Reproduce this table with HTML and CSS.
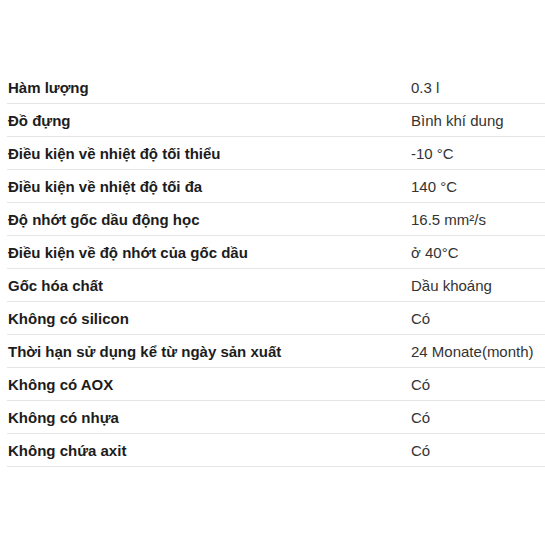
FILE: index.html
```html
<!DOCTYPE html>
<html lang="vi">
<head>
<meta charset="utf-8">
<link rel="stylesheet" href="styles.css">
</head>
<body>
<div class="specs">
  <div class="row"><div class="k">Hàm lượng</div><div class="v">0.3 l</div></div>
  <div class="row"><div class="k">Đồ đựng</div><div class="v">Bình khí dung</div></div>
  <div class="row"><div class="k">Điều kiện về nhiệt độ tối thiểu</div><div class="v">-10 °C</div></div>
  <div class="row"><div class="k">Điều kiện về nhiệt độ tối đa</div><div class="v">140 °C</div></div>
  <div class="row"><div class="k">Độ nhớt gốc dầu động học</div><div class="v">16.5 mm²/s</div></div>
  <div class="row"><div class="k">Điều kiện về độ nhớt của gốc dầu</div><div class="v">ở 40°C</div></div>
  <div class="row"><div class="k">Gốc hóa chất</div><div class="v">Dầu khoáng</div></div>
  <div class="row"><div class="k">Không có silicon</div><div class="v">Có</div></div>
  <div class="row"><div class="k">Thời hạn sử dụng kể từ ngày sản xuất</div><div class="v">24 Monate(month)</div></div>
  <div class="row"><div class="k">Không có AOX</div><div class="v">Có</div></div>
  <div class="row"><div class="k">Không có nhựa</div><div class="v">Có</div></div>
  <div class="row"><div class="k">Không chứa axit</div><div class="v">Có</div></div>
</div>
</body>
</html>
```
FILE: styles.css
```css
html, body {
  margin: 0;
  padding: 0;
  background: #fff;
}
body {
  font-family: "Liberation Sans", Arial, sans-serif;
  font-size: 15px;
  color: #222;
}
.specs {
  margin: 71px 0 0 7px;
  display: flex;
  flex-direction: column;
}
.row {
  display: grid;
  grid-template-columns: 404px 1fr;
  height: 33px;
  align-items: center;
  border-bottom: 1px solid #e6e6e6;
  box-sizing: border-box;
}
.row:first-child {
  height: 33px;
}
.k {
  padding-left: 1px;
  font-weight: bold;
  color: #1c1c1c;
}
.v {
  color: #333;
  white-space: nowrap;
}
```
